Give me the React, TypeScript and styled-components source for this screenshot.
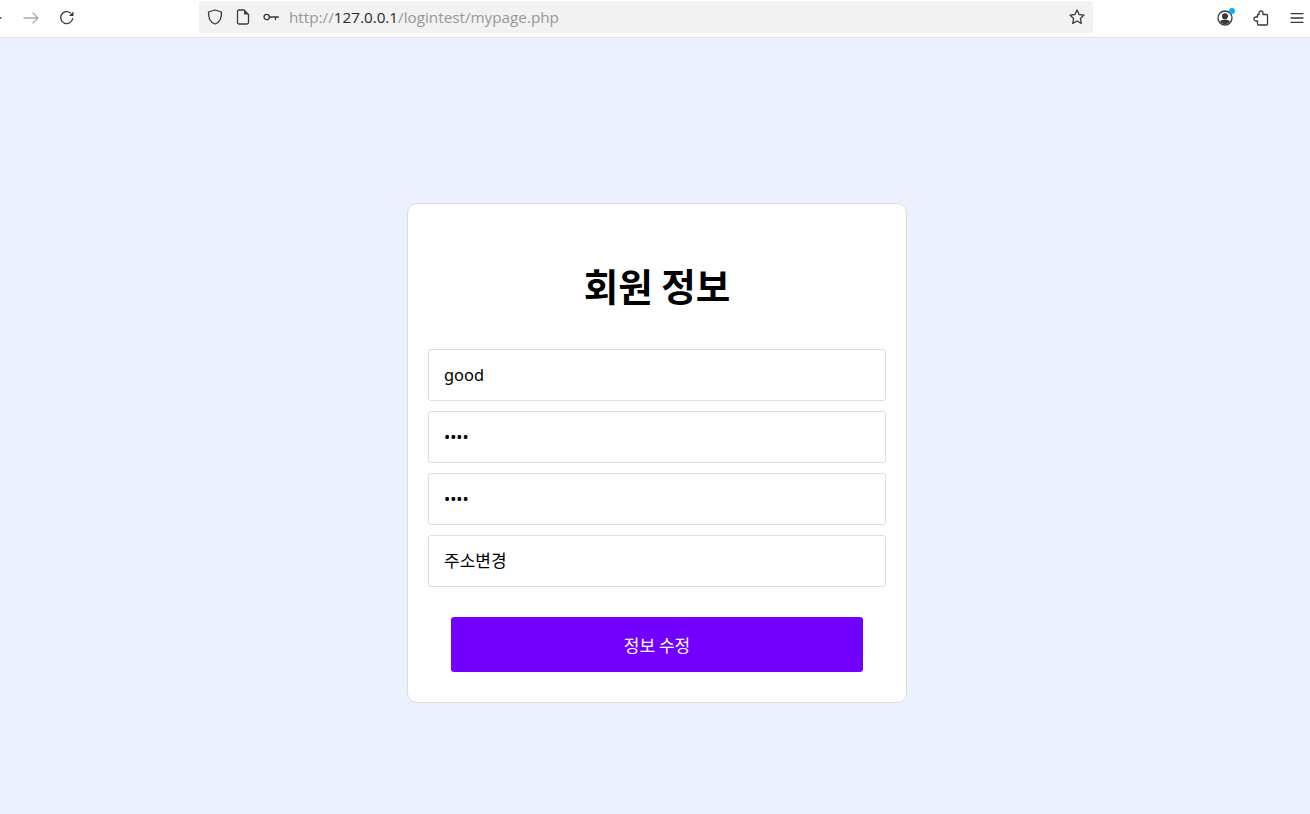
import React from "react";
import styled, { createGlobalStyle } from "styled-components";

const Global = createGlobalStyle`
  html, body { margin: 0; padding: 0; height: 100%; }
  body { background: #edf0fe; font-family: "Noto Sans", "Noto Sans CJK KR", sans-serif; overflow: hidden; }
  * { box-sizing: border-box; }
`;

const Page = styled.div`
  width: 1310px;
  height: 814px;
  display: flex;
  flex-direction: column;
  background: #edf0fe;
`;

const Toolbar = styled.header`
  height: 38px;
  flex: none;
  display: flex;
  align-items: flex-start;
  background: #fff;
  border-bottom: 1px solid #e0e0e6;
`;

const NavGroup = styled.nav`
  width: 214px;
  height: 35px;
  flex: none;
  display: flex;
  align-items: center;
  margin-left: -15px;
  gap: 16px;
`;

const IconSlot = styled.span<{ $w?: number }>`
  width: ${(p) => p.$w ?? 20}px;
  height: 20px;
  flex: none;
  display: flex;
  align-items: center;
  justify-content: center;
`;

const UrlBar = styled.div`
  width: 894px;
  height: 32px;
  margin-top: 1px;
  flex: none;
  display: flex;
  align-items: center;
  padding: 0 8px 0 8px;
  background: #f2f2f2;
  border-radius: 4px;
`;

const UrlIcons = styled.div`
  display: flex;
  align-items: center;
  gap: 12px;
  margin-right: 10px;
`;

const UrlText = styled.div`
  flex: 1;
  font-family: "Open Sans", "Noto Sans", sans-serif;
  font-size: 15.25px;
  color: #97979b;
  white-space: nowrap;
`;

const Host = styled.span`
  color: #2b2a33;
`;

const RightTools = styled.div`
  flex: 1;
  height: 35px;
  display: flex;
  align-items: center;
  justify-content: flex-end;
  gap: 16px;
  margin-right: 3px;
`;

const AccountWrap = styled.span`
  position: relative;
  display: flex;
`;

const Dot = styled.span`
  position: absolute;
  top: 0;
  right: 0;
  width: 6px;
  height: 6px;
  border-radius: 50%;
  background: #00b3f4;
`;

const Main = styled.main`
  flex: 1;
  display: flex;
  justify-content: center;
  padding: 165px 0 0 4px;
`;

const Card = styled.section`
  width: 500px;
  height: 500px;
  padding: 0 20px;
  background: #fff;
  border: 1px solid #ddd;
  border-radius: 10px;
  display: flex;
  flex-direction: column;
  align-items: center;
`;

const Title = styled.h1`
  margin: 53px 0 0;
  height: 56px;
  line-height: 56px;
  font-family: "Noto Sans CJK KR", "Noto Sans", sans-serif;
  font-size: 37.5px;
  font-weight: 700;
  color: #000;
  text-align: center;
`;

const Form = styled.form`
  width: 458px;
  margin-top: 36px;
  display: flex;
  flex-direction: column;
  align-items: center;
  gap: 10px;
`;

const Field = styled.input<{ $korean?: boolean }>`
  width: 100%;
  height: 52px;
  padding: ${(p) => (p.$korean ? "0 15px 3px" : "0 15px 2px")};
  border: 1px solid #ddd;
  border-radius: 3px;
  background: #fff;
  font-family: "Noto Sans", "Noto Sans CJK KR", sans-serif;
  font-size: ${(p) => (p.$korean ? "17px" : "16.4px")};
  color: #000;
  outline: none;
`;

const Submit = styled.button`
  width: 412px;
  height: 55px;
  margin-top: 20px;
  padding: 0;
  border: none;
  border-radius: 3px;
  background: #7300ff;
  color: #fff;
  font-family: "Noto Sans CJK KR", "Noto Sans", sans-serif;
  font-size: 17px;
`;

const Ico = styled.svg<{ $muted?: boolean }>`
  display: block;
  fill: none;
  stroke: ${(p) => (p.$muted ? "#a9a9ad" : "#3a3940")};
  stroke-width: 1.3;
  stroke-linecap: round;
  stroke-linejoin: round;
`;

export default function App() {
  return (
    <Page>
      <Global />
      <Toolbar>
        <NavGroup>
          <IconSlot>
            <Ico width="16" height="16" viewBox="0 0 16 16"><path d="M14 8H2M7 3 2 8l5 5" /></Ico>
          </IconSlot>
          <IconSlot>
            <Ico $muted width="16" height="16" viewBox="0 0 16 16"><path d="M1 8h14M10 3l5 5-5 5" /></Ico>
          </IconSlot>
          <IconSlot>
            <Ico width="16" height="16" viewBox="0 0 16 16">
              <path d="M13.6 8.600A6 6 0 1 1 11.500 3" />
              <path d="M14.500 1.500v4.600H10z" fill="#3a3940" stroke="none" />
            </Ico>
          </IconSlot>
        </NavGroup>
        <UrlBar>
          <UrlIcons>
            <IconSlot $w={16}>
              <Ico width="16" height="16" viewBox="0 0 16 16"><path d="M8 1 14.500 3c0 6-1 10-6.500 12C2.500 13 1.500 9 1.500 3z" /></Ico>
            </IconSlot>
            <IconSlot $w={16}>
              <Ico width="16" height="16" viewBox="0 0 16 16">
                <path d="M2.500 2.500A1.500 1.500 0 0 1 4 1h5l4.500 4.500v8A1.500 1.500 0 0 1 12 15H4a1.500 1.500 0 0 1-1.500-1.500z" />
                <path d="M9 1v4.500h4.500z" fill="#3a3940" stroke="none" />
              </Ico>
            </IconSlot>
            <IconSlot $w={16}>
              <Ico width="16" height="16" viewBox="0 0 16 16">
                <circle cx="3.700" cy="8" r="2.700" />
                <path d="M6.400 8h9M12.500 8v2.500" />
              </Ico>
            </IconSlot>
          </UrlIcons>
          <UrlText>
            http://<Host>127.0.0.1</Host>/logintest/mypage.php
          </UrlText>
          <IconSlot $w={16}>
            <Ico width="16" height="16" viewBox="0 0 16 16">
              <path d="m8 1 2.100 4.500 4.900.6-3.600 3.400.9 4.900L8 12l-4.300 2.400.9-4.900L1 6.100l4.900-.6z" />
            </Ico>
          </IconSlot>
        </UrlBar>
        <RightTools>
          <AccountWrap>
            <IconSlot>
              <Ico width="16" height="16" viewBox="0 0 16 16">
                <circle cx="8" cy="8" r="7" />
                <circle cx="8" cy="6.200" r="2.400" fill="#3a3940" />
                <path d="M3.800 11.500c1-1 2.400-1.400 4.200-1.400s3.200.4 4.200 1.400C11.300 13 9.800 13.500 8 13.500s-3.300-.5-4.200-2z" fill="#3a3940" />
              </Ico>
            </IconSlot>
            <Dot />
          </AccountWrap>
          <IconSlot>
            <Ico width="16" height="16" viewBox="0 0 16 16">
              <path d="M6 3.500V3a2 2 0 0 1 4 0v1.500h3.500a1 1 0 0 1 1 1V14a1 1 0 0 1-1 1H5.500a1 1 0 0 1-1-1v-3H3a2 2 0 0 1 0-4h1.500V4.500H6z" />
            </Ico>
          </IconSlot>
          <IconSlot>
            <Ico width="16" height="16" viewBox="0 0 16 16"><path d="M2 3.700h12M2 8h12M2 12.300h12" /></Ico>
          </IconSlot>
        </RightTools>
      </Toolbar>
      <Main>
        <Card>
          <Title>회원 정보</Title>
          <Form>
            <Field type="text" defaultValue="good" />
            <Field type="password" defaultValue="good" />
            <Field type="password" defaultValue="good" />
            <Field $korean type="text" defaultValue="주소변경" />
            <Submit type="button">정보 수정</Submit>
          </Form>
        </Card>
      </Main>
    </Page>
  );
}
